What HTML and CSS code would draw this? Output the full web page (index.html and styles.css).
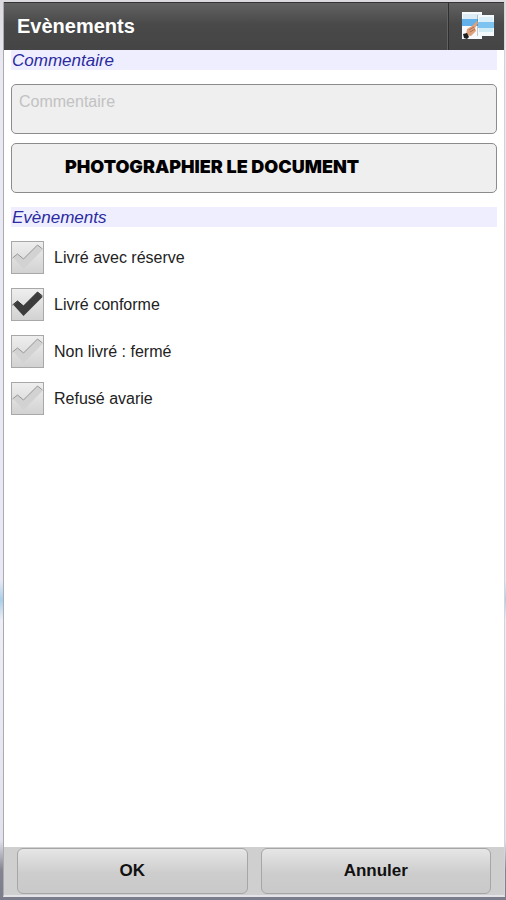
FILE: index.html
```html
<!DOCTYPE html>
<html lang="fr">
<head>
    <meta charset="UTF-8">
    <meta name="viewport" content="width=device-width, initial-scale=1.0">
    <title>Evènements</title>
    <link rel="stylesheet" href="styles.css">
</head>
<body>
    <!-- shared check mark -->
    <svg class="defs" width="0" height="0" aria-hidden="true">
        <symbol id="check" viewBox="0 0 32 33">
            <path class="check-shape" d="M2 17 L6 13 L12 18 L26 4 L31 9 L12 28 Z"/>
            <path class="check-edge" d="M1 17 L6 13 L12 18 L26 4 L31 8"/>
        </symbol>
    </svg>

    <div class="window">
        <header class="header">
            <h1>Evènements</h1>
            <button type="button" class="header-action" aria-label="Photos">
                <svg width="34" height="30" viewBox="0 0 34 30" aria-hidden="true">
                    <rect x="2" y="1" width="20" height="27" fill="#f6fafc"/>
                    <rect x="3" y="3" width="18" height="5" fill="#dcecf6"/>
                    <rect x="2" y="8" width="20" height="7" fill="#62b1ea"/>
                    <rect x="17" y="4" width="17" height="21" fill="#4a4a4a" opacity="0.3"/>
                    <rect x="18" y="4" width="16" height="21" fill="#f4fafc"/>
                    <rect x="19" y="6" width="14" height="5" fill="#d9eef8"/>
                    <rect x="18" y="11" width="16" height="6" fill="#7cc3f0"/>
                    <rect x="19" y="17" width="14" height="4" fill="#d2ecf6"/>
                    <path d="M7 18 L12 15 L17 10 L18 12 L15 17 L16 20 L11 25 L6 24 Z" fill="#dea17c"/>
                    <path d="M9 19 L14 16 M10 21 L15 18" stroke="#a96d4e" stroke-width="1"/>
                    <path d="M3 23 L7 22 L9 26 L7 28 L4 27 Z" fill="#1d1d1d"/>
                </svg>
            </button>
        </header>

        <main class="content">
            <h2><label for="commentaire">Commentaire</label></h2>
            <textarea id="commentaire" class="comment" placeholder="Commentaire"></textarea>
            <button type="button" class="photo-button">PHOTOGRAPHIER LE DOCUMENT</button>

            <h2>Evènements</h2>
            <div class="events">
                <label class="event">
                    <span class="box"><input type="checkbox"><svg><use href="#check"/></svg></span>
                    Livré avec réserve
                </label>
                <label class="event">
                    <span class="box"><input type="checkbox" checked><svg><use href="#check"/></svg></span>
                    Livré conforme
                </label>
                <label class="event">
                    <span class="box"><input type="checkbox"><svg><use href="#check"/></svg></span>
                    Non livré : fermé
                </label>
                <label class="event">
                    <span class="box"><input type="checkbox"><svg><use href="#check"/></svg></span>
                    Refusé avarie
                </label>
            </div>
        </main>

        <footer class="footer">
            <button type="button">OK</button>
            <button type="button">Annuler</button>
        </footer>
    </div>
</body>
</html>
```
FILE: styles.css
```css
* {
    box-sizing: border-box;
}

body {
    margin: 0;
    padding: 2px 1px 3px 3px;
    min-height: 100vh;
    display: flex;
    font-family: "Liberation Sans", Arial, sans-serif;
    font-size: 16px;
    color: #222;
    background: linear-gradient(#dcd9de 0, #e9e9f2 60px, #e9e9f6 580px, #a9cfe8 600px, #eeeef6 620px, #e2e2ee 840px, #858590 870px, #7b7c8c 100%);
}

.defs {
    position: absolute;
}

.window {
    flex: 1;
    display: flex;
    flex-direction: column;
    background: #fff;
    border-left: 1px solid #aaaab0;
    border-right: 1px solid #d4d4d8;
    border-bottom: 2px solid #e4e4e8;
}

button {
    font-family: inherit;
    cursor: pointer;
}

/* header */
.header {
    display: flex;
    height: 48px;
    border-top: 1px solid #333;
    background: linear-gradient(#626262, #494949 45%, #454545);
}

.header h1 {
    flex: 1;
    margin: 0;
    padding-left: 13px;
    font-size: 20px;
    line-height: 46px;
    color: #fff;
}

.header-action {
    display: flex;
    align-items: center;
    justify-content: center;
    width: 56px;
    padding: 0 0 2px;
    border: 0;
    border-left: 1px solid #2e2e2e;
    background: none;
    box-shadow: -1px 0 #626262;
}

/* content */
.content {
    flex: 1;
    padding: 0 7px;
}

.content h2 {
    margin: 0;
    padding: 2px 0 0 1px;
    font-size: 17px;
    font-style: italic;
    font-weight: normal;
    line-height: 18px;
    color: #2a2aa0;
    background: #eeeeff;
}

.comment,
.photo-button {
    display: block;
    width: 100%;
    height: 50px;
    border: 1px solid #8c8c8c;
    border-radius: 5px;
    background: #efefef;
}

.comment {
    margin: 14px 0 9px;
    padding: 7px;
    font-family: inherit;
    font-size: 16px;
    line-height: 20px;
    resize: none;
}

.comment::placeholder {
    color: #c2c2c2;
}

.photo-button {
    margin-bottom: 14px;
    padding: 0 0 4px 53px;
    font-family: Inter, "Open Sans", sans-serif;
    font-size: 18px;
    font-weight: 900;
    text-align: left;
    color: #000;
}

.events {
    display: flex;
    flex-direction: column;
    gap: 14px;
    padding-top: 14px;
}

.event {
    display: flex;
    align-items: center;
    gap: 10px;
    line-height: 20px;
}

.box {
    display: grid;
    width: 33px;
    height: 33px;
}

.box input,
.box svg {
    grid-area: 1 / 1;
    width: 100%;
    height: 100%;
    margin: 0;
}

.box input {
    appearance: none;
    border: 1px solid #a8a8a8;
    background: linear-gradient(#eeeeee, #d2d2d2);
}

.box svg {
    pointer-events: none;
    fill: #d2d2d2;
    stroke: #969696;
}

.check-shape {
    stroke: none;
}

.check-edge {
    fill: none;
}

.box input:checked + svg {
    fill: #3c3c3c;
    stroke: #303030;
}

/* footer */
.footer {
    display: flex;
    gap: 13px;
    padding: 1px 13px;
    background: #cfcfcf;
}

.footer button {
    flex: 1;
    height: 46px;
    padding-bottom: 1px;
    border: 1px solid #a6a6a6;
    border-radius: 6px;
    background: linear-gradient(#e6e6e6, #cdcdcd 55%, #c9c9c9);
    font-size: 17px;
    font-weight: bold;
    color: #111;
}
```
